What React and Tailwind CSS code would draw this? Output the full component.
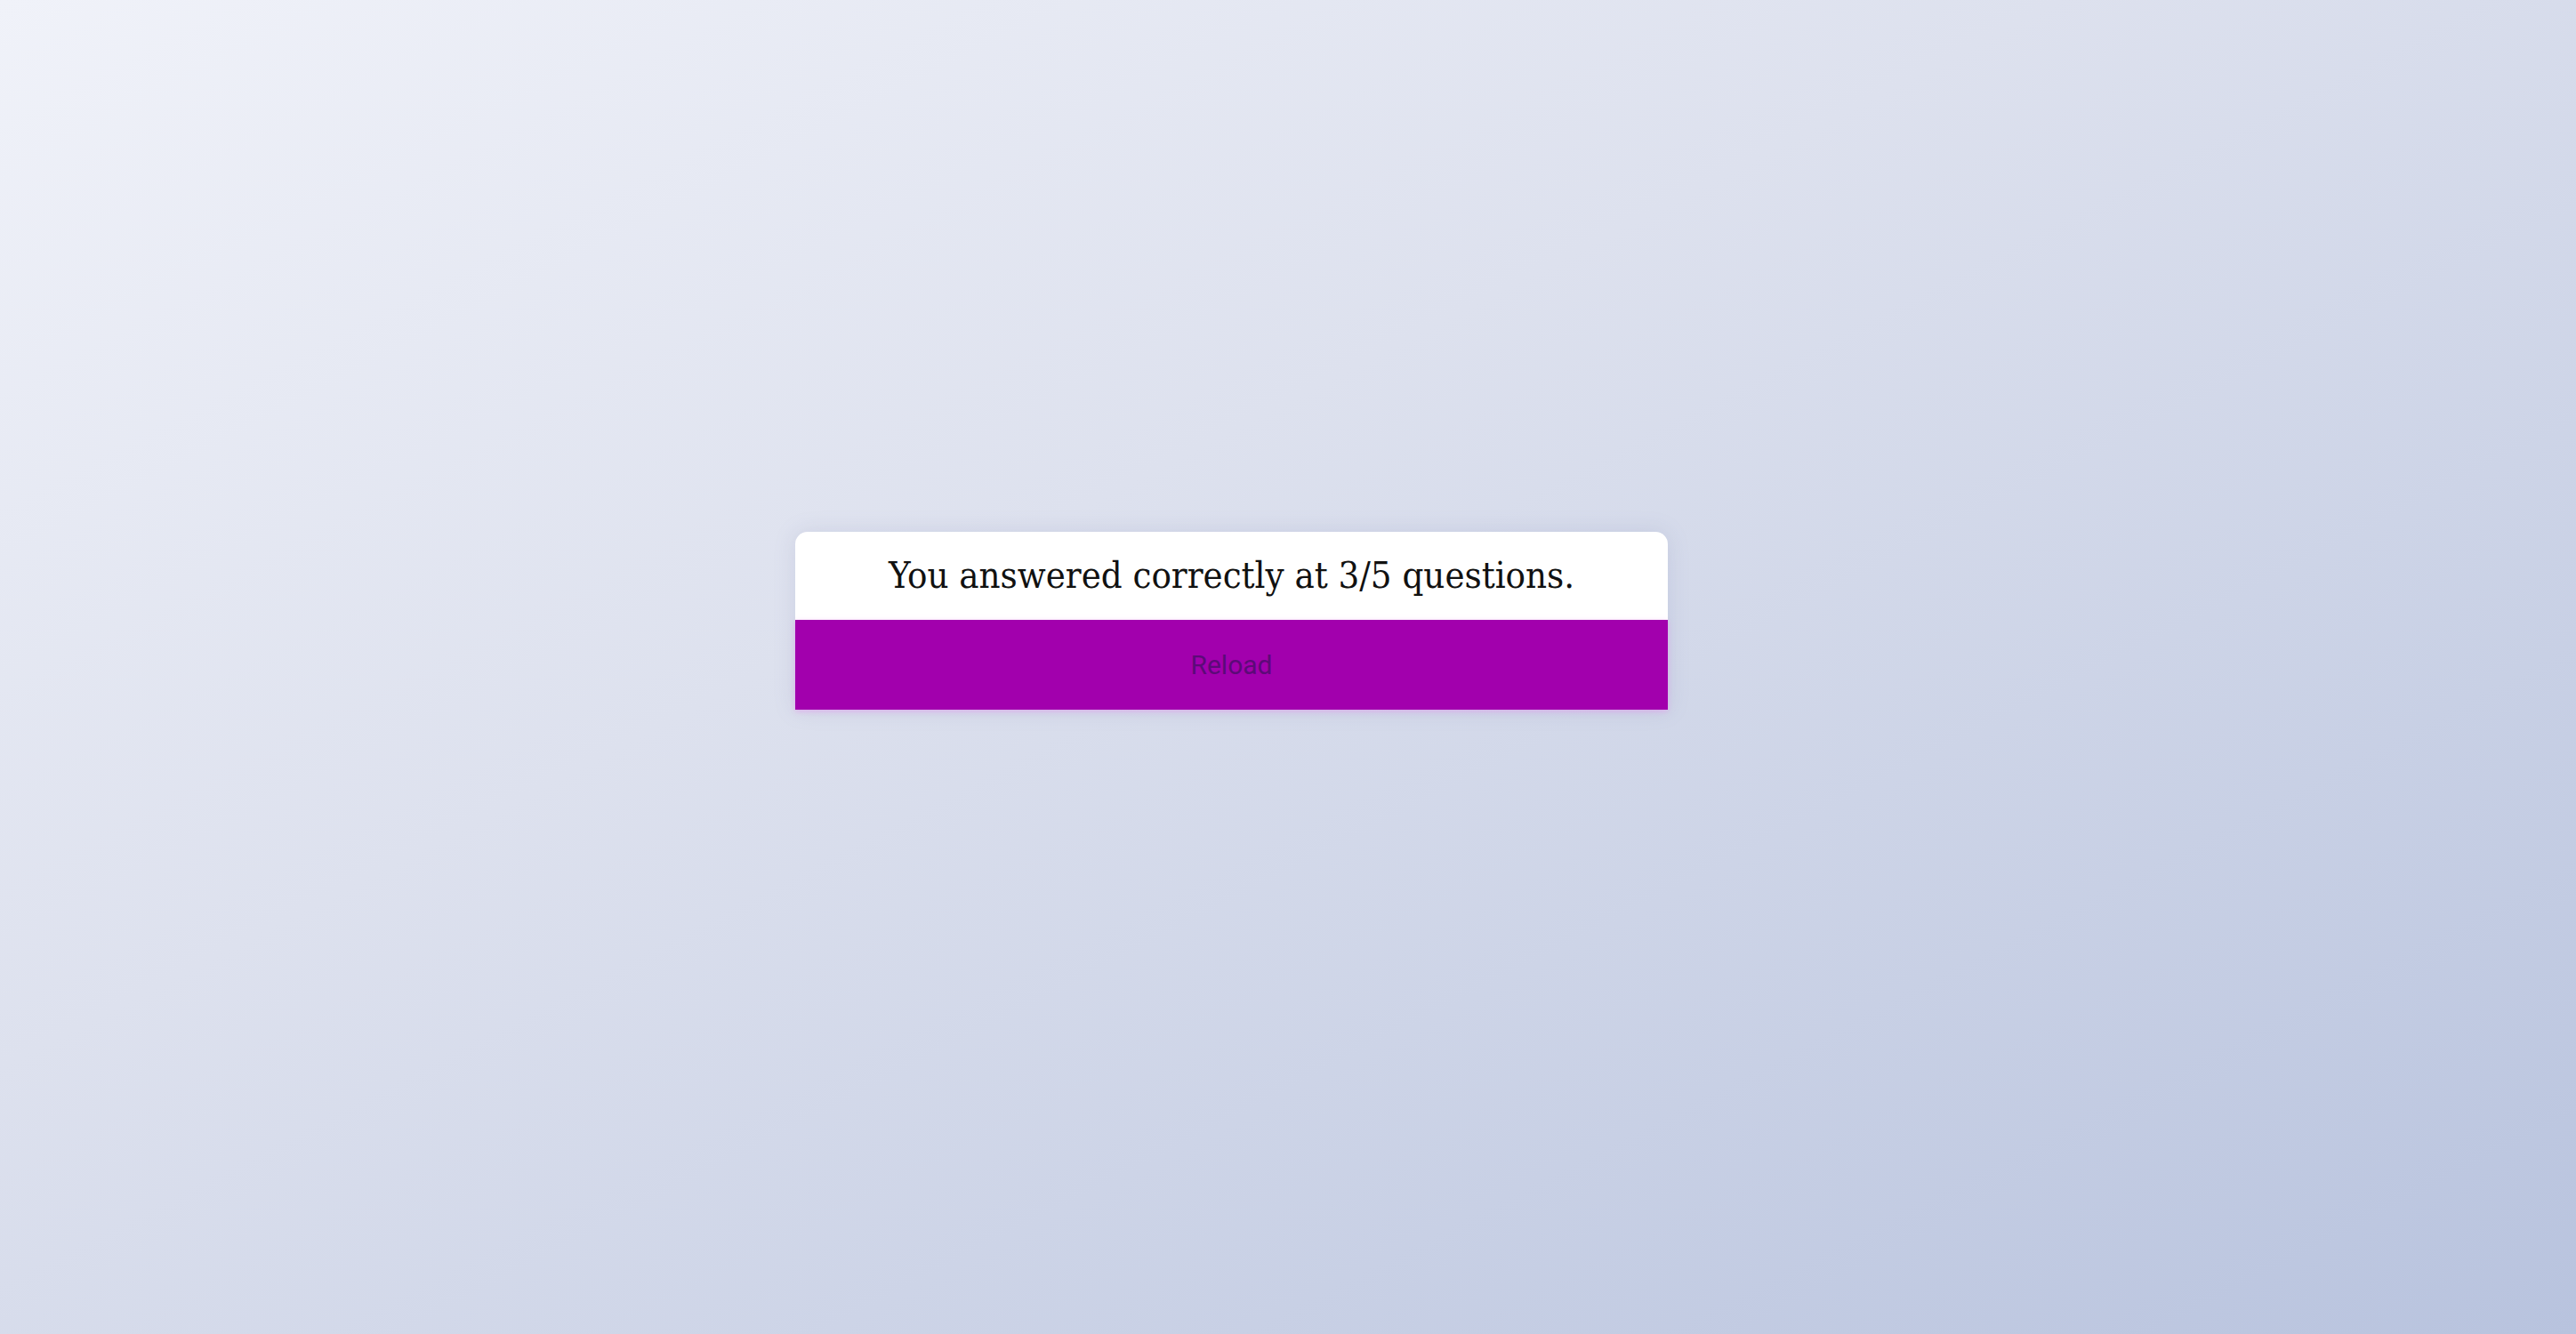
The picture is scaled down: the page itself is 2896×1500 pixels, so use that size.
// Quiz result card on a soft diagonal gradient

export default function App() {
  return (
    <div className="min-h-screen w-full bg-[linear-gradient(to_bottom_right,#f0f2f9,#dde1ee_40%,#b8c3de)] pt-[598px] pl-[894px]">
      <div className="w-[981px] rounded-t-[14px] bg-white shadow-[0_0_24px_rgba(120,130,170,0.18)]">
        <div className="flex h-[99px] items-center justify-center">
          <h2 className="text-[41.5px] text-[#111] [font-family:'DejaVu_Serif_Condensed','DejaVu_Serif',serif] [font-stretch:condensed]">
            You answered correctly at 3/5 questions.
          </h2>
        </div>
        <button className="flex h-[101px] w-full items-center justify-center bg-[#a200ad] text-[30px] text-[#5c0a78] shadow-[0_2px_6px_rgba(230,150,240,0.6)] [font-family:Roboto,sans-serif]">
          Reload
        </button>
      </div>
    </div>
  );
}
